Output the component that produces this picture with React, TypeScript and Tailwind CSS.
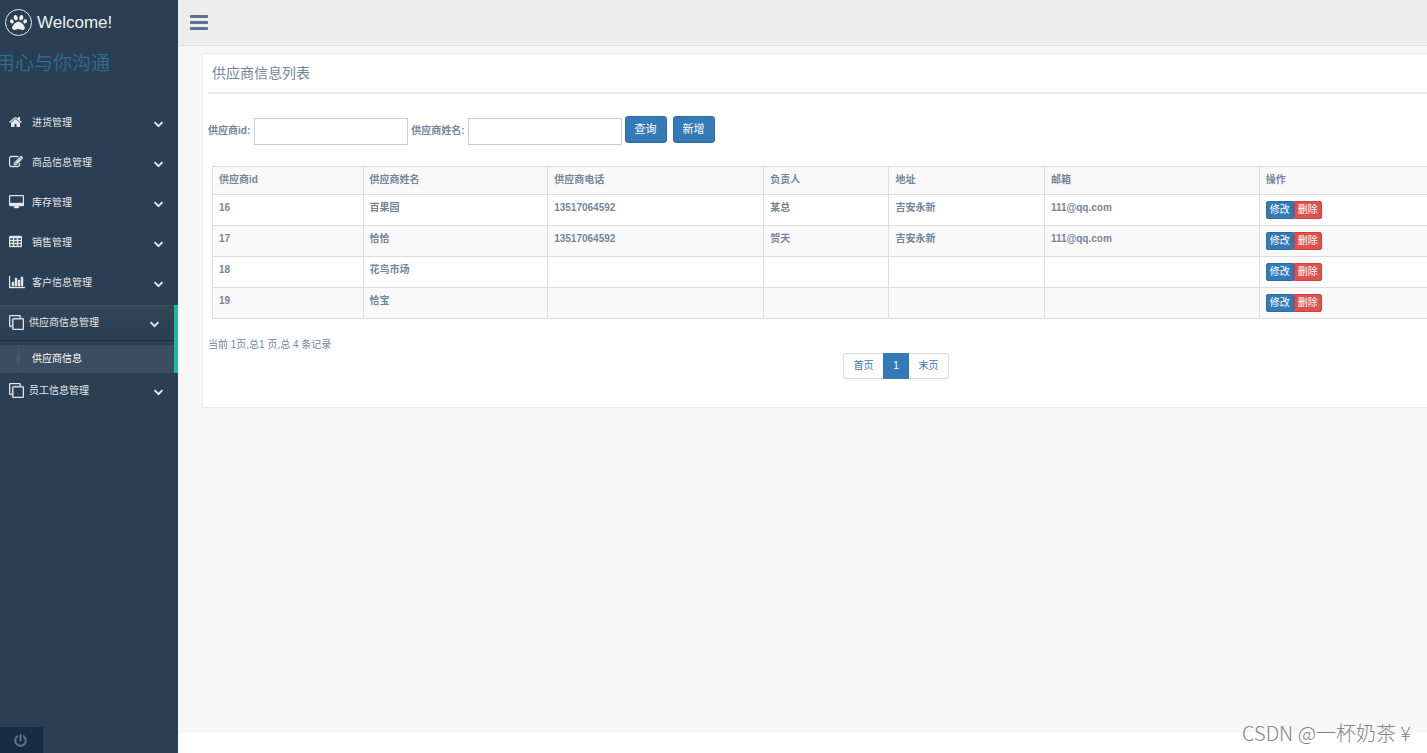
import { FaPaw, FaPowerOff } from "react-icons/fa";

type IconName = "home" | "edit" | "desktop" | "table" | "chart" | "clone";

const icons: Record<IconName, { viewBox: string; d: string }> = {
  home: {
    viewBox: "64 0 1664 1792",
    d: "M1472 992v480q0 26-19 45t-45 19h-384v-384h-256v384h-384q-26 0-45-19t-19-45v-480q0-1 .5-3t.5-3l575-474 575 474q1 2 1 6zm223-69l-62 74q-8 9-21 11h-3q-13 0-21-7l-692-577-692 577q-12 8-24 7-13-2-21-11l-62-74q-8-10-7-23.5t11-21.5l719-599q32-26 76-26t76 26l244 204v-195q0-14 9-23t23-9h192q14 0 23 9t9 23v408l219 182q10 8 11 21.5t-7 23.5z",
  },
  edit: {
    viewBox: "0 0 1792 1792",
    d: "M888 1184l116-116-152-152-116 116v56h96v96h56zm440-720q-16-16-33 1l-350 350q-17 17-1 33t33-1l350-350q17-17 1-33zm80 594v190q0 119-84.5 203.5t-203.5 84.5h-832q-119 0-203.5-84.5t-84.5-203.5v-832q0-119 84.5-203.5t203.5-84.5h832q63 0 117 25 15 7 18 23 3 17-9 29l-49 49q-14 14-32 8-23-6-45-6h-832q-66 0-113 47t-47 113v832q0 66 47 113t113 47h832q66 0 113-47t47-113v-126q0-13 9-22l64-64q15-15 35-7t20 29zm-96-738l288 288-672 672h-288v-288zm444 132l-92 92-288-288 92-92q28-28 68-28t68 28l152 152q28 28 28 68t-28 68z",
  },
  desktop: {
    viewBox: "-64 0 1920 1792",
    d: "M1728 992v-832q0-13-9.5-22.5t-22.5-9.5h-1600q-13 0-22.5 9.5t-9.5 22.5v832q0 13 9.5 22.5t22.5 9.5h1600q13 0 22.5-9.5t9.5-22.5zm128-832v1088q0 66-47 113t-113 47h-544q0 37 16 77.5t32 71 16 43.5q0 26-19 45t-45 19h-512q-26 0-45-19t-19-45q0-14 16-44t32-70 16-78h-544q-66 0-113-47t-47-113v-1088q0-66 47-113t113-47h1600q66 0 113 47t47 113z",
  },
  table: {
    viewBox: "64 0 1664 1792",
    d: "M1728 288v1088q0 66-47 113t-113 47h-1344q-66 0-113-47t-47-113v-1088q0-66 47-113t113-47h1344q66 0 113 47t47 113zM192 384h384v256h-384zM704 384h384v256h-384zM1216 384h384v256h-384zM192 768h384v256h-384zM704 768h384v256h-384zM1216 768h384v256h-384zM192 1152h384v256h-384zM704 1152h384v256h-384zM1216 1152h384v256h-384z",
  },
  chart: {
    viewBox: "0 0 2048 1792",
    d: "M640 896v512h-256v-512h256zm384-512v1024h-256v-1024h256zm1024 1152v128h-2048v-1536h128v1408h1920zm-640-896v768h-256v-768h256zm384-384v1152h-256v-1152h256z",
  },
  clone: {
    viewBox: "0 0 1792 1792",
    d: "M1664 1632v-1088q0-13-9.5-22.5t-22.5-9.5h-1088q-13 0-22.5 9.5t-9.5 22.5v1088q0 13 9.5 22.5t22.5 9.5h1088q13 0 22.5-9.5t9.5-22.5zm128-1088v1088q0 66-47 113t-113 47h-1088q-66 0-113-47t-47-113v-1088q0-66 47-113t113-47h1088q66 0 113 47t47 113zm-384-384v160h-128v-160q0-13-9.5-22.5t-22.5-9.5h-1088q-13 0-22.5 9.5t-9.5 22.5v1088q0 13 9.5 22.5t22.5 9.5h160v128h-160q-66 0-113-47t-47-113v-1088q0-66 47-113t113-47h1088q66 0 113 47t47 113z",
  },
};

const menu: { label: string; icon: IconName; children?: string[] }[] = [
  { label: "进货管理", icon: "home" },
  { label: "商品信息管理", icon: "edit" },
  { label: "库存管理", icon: "desktop" },
  { label: "销售管理", icon: "table" },
  { label: "客户信息管理", icon: "chart" },
  { label: "供应商信息管理", icon: "clone", children: ["供应商信息"] },
  { label: "员工信息管理", icon: "clone" },
];

const columns = [
  { label: "供应商id", width: "w-[12.4%]" },
  { label: "供应商姓名", width: "w-[15.2%]" },
  { label: "供应商电话", width: "w-[17.8%]" },
  { label: "负责人", width: "w-[10.3%]" },
  { label: "地址", width: "w-[12.8%]" },
  { label: "邮箱", width: "w-[17.7%]" },
  { label: "操作", width: "w-auto" },
];

const suppliers = [
  ["16", "百果园", "13517064592", "某总", "吉安永新", "111@qq.com"],
  ["17", "恰恰", "13517064592", "贺天", "吉安永新", "111@qq.com"],
  ["18", "花鸟市场", "", "", "", ""],
  ["19", "恰宝", "", "", "", ""],
];

function MenuIcon({ name }: { name: IconName }) {
  return (
    <svg
      viewBox={icons[name].viewBox}
      className={name === "clone" ? "h-[15px] w-auto" : "h-[15px] w-auto pb-px"}
      fill="currentColor"
      fillRule="evenodd"
      stroke="currentColor"
      strokeWidth={name === "home" ? 0 : 50}
    >
      <path d={icons[name].d} />
    </svg>
  );
}

function Sidebar() {
  return (
    <aside className="flex w-[178px] shrink-0 flex-col overflow-hidden bg-[#2a3f54] text-[#e7e7e7]">
      <a href="#" className="flex h-[45px] items-center gap-[5px] pl-[5px] text-[17px] text-[#ecf0f1]">
        <span className="flex h-[27px] w-[27px] items-center justify-center rounded-full border border-[#eaeaea]">
          <FaPaw className="h-[17px] w-[17px]" />
        </span>
        <span>Welcome!</span>
      </a>
      <h2 className="-ml-1 pb-[3px] pt-[5px] text-[19px] leading-7 text-[#2e6a8c]">用心与你沟通</h2>

      <nav className="mt-6">
        <ul>
          {menu.map((item) => (
            <li key={item.label} className={item.children ? "border-r-4 border-[#1abb9c]" : ""}>
              <a
                href="#"
                className={
                  "mb-1 flex h-9 items-center pb-0.5 pl-[9px] pr-[15px] " +
                  (item.children
                    ? "border-b border-t border-b-[#1f3042] border-t-[#3f5265] bg-linear-to-b from-[#334556] to-[#2a3f54]"
                    : "")
                }
              >
                <span className={item.icon === "clone" ? "w-5" : "w-[23px]"}>
                  <MenuIcon name={item.icon} />
                </span>
                <span className="flex-1">{item.label}</span>
                <svg viewBox="90 480 1612 1160" className="mt-1 h-[7px] w-[9px]" fill="currentColor">
                  <path d="M1683 808l-742 741q-19 19-45 19t-45-19l-742-741q-19-19-19-45.5t19-45.5l166-165q19-19 45-19t45 19l531 531 531-531q19-19 45-19t45 19l166 165q19 19 19 45.5t-19 45.5z" />
                </svg>
              </a>
              {item.children?.map((child) => (
                <a
                  key={child}
                  href="#"
                  className="flex h-7 items-center bg-[#3b4d60] text-white"
                >
                  <span className="flex h-full w-8 items-center justify-center pl-1">
                    <span className="flex h-full w-px items-center justify-center bg-[#425668]">
                      <span className="h-[6px] w-[6px] shrink-0 rounded-full bg-[#425668]" />
                    </span>
                  </span>
                  <span className="pb-0.5">{child}</span>
                </a>
              ))}
            </li>
          ))}
        </ul>
      </nav>

      <button
        aria-label="退出"
        className="mt-auto flex h-[26px] w-[43px] items-center justify-center bg-[#172d44] pr-0.5 text-[#5a738e]"
      >
        <FaPowerOff className="h-[13px] w-[13px]" />
      </button>
    </aside>
  );
}

function SearchForm() {
  return (
    <form className="flex items-start gap-[3px] font-bold" onSubmit={(e) => e.preventDefault()}>
      <div className="flex items-center gap-1 pt-0.5">
        <label htmlFor="supplier-id" className="pb-0.5">供应商id:</label>
        <input id="supplier-id" className="h-[27px] w-[154px] border border-[#ccc] bg-white px-2" />
      </div>
      <div className="flex items-center gap-[3px] pt-0.5">
        <label htmlFor="supplier-name" className="pb-0.5">供应商姓名:</label>
        <input id="supplier-name" className="h-[27px] w-[154px] border border-[#ccc] bg-white px-2" />
      </div>
      <div className="flex gap-[6px] text-[11px] font-normal text-white">
        <button className="h-[27px] w-[42px] rounded-[3px] border border-[#2e6da4] bg-[#337ab7]">查询</button>
        <button className="h-[27px] w-[42px] rounded-[3px] border border-[#2e6da4] bg-[#337ab7]">新增</button>
      </div>
    </form>
  );
}

function SupplierTable() {
  return (
    <table className="w-full table-fixed border-collapse border-y border-l border-[#ddd] text-left font-bold">
      <thead>
        <tr className="bg-[#f9f9f9]">
          {columns.map((col) => (
            <th key={col.label} className={"border-b border-l border-[#ddd] px-[6px] pb-[7px] pt-[5px] " + col.width}>
              {col.label}
            </th>
          ))}
        </tr>
      </thead>
      <tbody>
        {suppliers.map((row) => (
          <tr key={row[0]} className="even:bg-[#f9f9f9]">
            {row.map((cell, i) => (
              <td key={i} className="border-b border-l border-[#ddd] px-[6px] pt-[5px] align-top">
                {cell}
              </td>
            ))}
            <td className="border-b border-l border-[#ddd] p-[6px] align-top">
              <div className="flex font-normal text-white">
                <button className="h-[18px] w-7 rounded-l-[2px] border border-[#2e6da4] bg-[#337ab7] leading-4">
                  修改
                </button>
                <button className="h-[18px] w-7 rounded-r-[2px] border border-[#d43f3a] bg-[#d9534f] leading-4">
                  删除
                </button>
              </div>
            </td>
          </tr>
        ))}
      </tbody>
    </table>
  );
}

export default function App() {
  return (
    <div className="relative flex min-h-screen overflow-hidden bg-white font-['Liberation_Sans','Noto_Sans_CJK_SC',sans-serif] text-[10px] leading-[15px] text-[#73879c]">
      <Sidebar />

      <div className="flex min-w-0 flex-1 flex-col">
        <header className="flex h-[46px] items-center border-b border-[#d9dee4] bg-[#ededed] pl-3">
          <button aria-label="菜单" className="text-[#5a738e]">
            <svg viewBox="128 256 1536 1280" className="h-[15px] w-[18px]" fill="currentColor">
              <rect x="128" y="256" width="1536" height="256" rx="64" />
              <rect x="128" y="768" width="1536" height="256" rx="64" />
              <rect x="128" y="1280" width="1536" height="256" rx="64" />
            </svg>
          </button>
        </header>

        <main className="flex-1 bg-[#f7f7f7] pl-6 pt-[7px]">
          <section className="border-y border-l border-[#e6e9ed] bg-white pb-7 pl-[5px]">
            <h2 className="border-b-2 border-[#e6e9ed] pb-2 pl-1 pt-2 text-[14px] leading-[22px]">
              供应商信息列表
            </h2>
            <div className="pt-[22px]">
              <SearchForm />
            </div>
            <div className="pl-1 pt-[21px]">
              <SupplierTable />
            </div>
            <p className="pb-px pt-[18px]">当前 1页,总1 页,总 4 条记录</p>
            <div className="ml-[52.1%] flex text-[#337ab7]">
              <a href="#" className="flex h-[26px] w-10 items-center justify-center rounded-l-[3px] border border-r-0 border-[#ddd] pb-0.5">
                首页
              </a>
              <a href="#" className="flex h-[26px] w-[26px] items-center justify-center bg-[#337ab7] pb-0.5 text-white">
                1
              </a>
              <a href="#" className="flex h-[26px] w-10 items-center justify-center rounded-r-[3px] border border-l-0 border-[#ddd] pb-0.5">
                末页
              </a>
            </div>
          </section>
        </main>
        <footer className="h-5 bg-white" />
      </div>

      {/* Watermark */}
      <span className="absolute bottom-1 right-4 font-['Noto_Sans_CJK_SC',sans-serif] text-[20px] font-light leading-8 text-[#858585]">
        CSDN @一杯奶茶 ¥
      </span>
    </div>
  );
}
